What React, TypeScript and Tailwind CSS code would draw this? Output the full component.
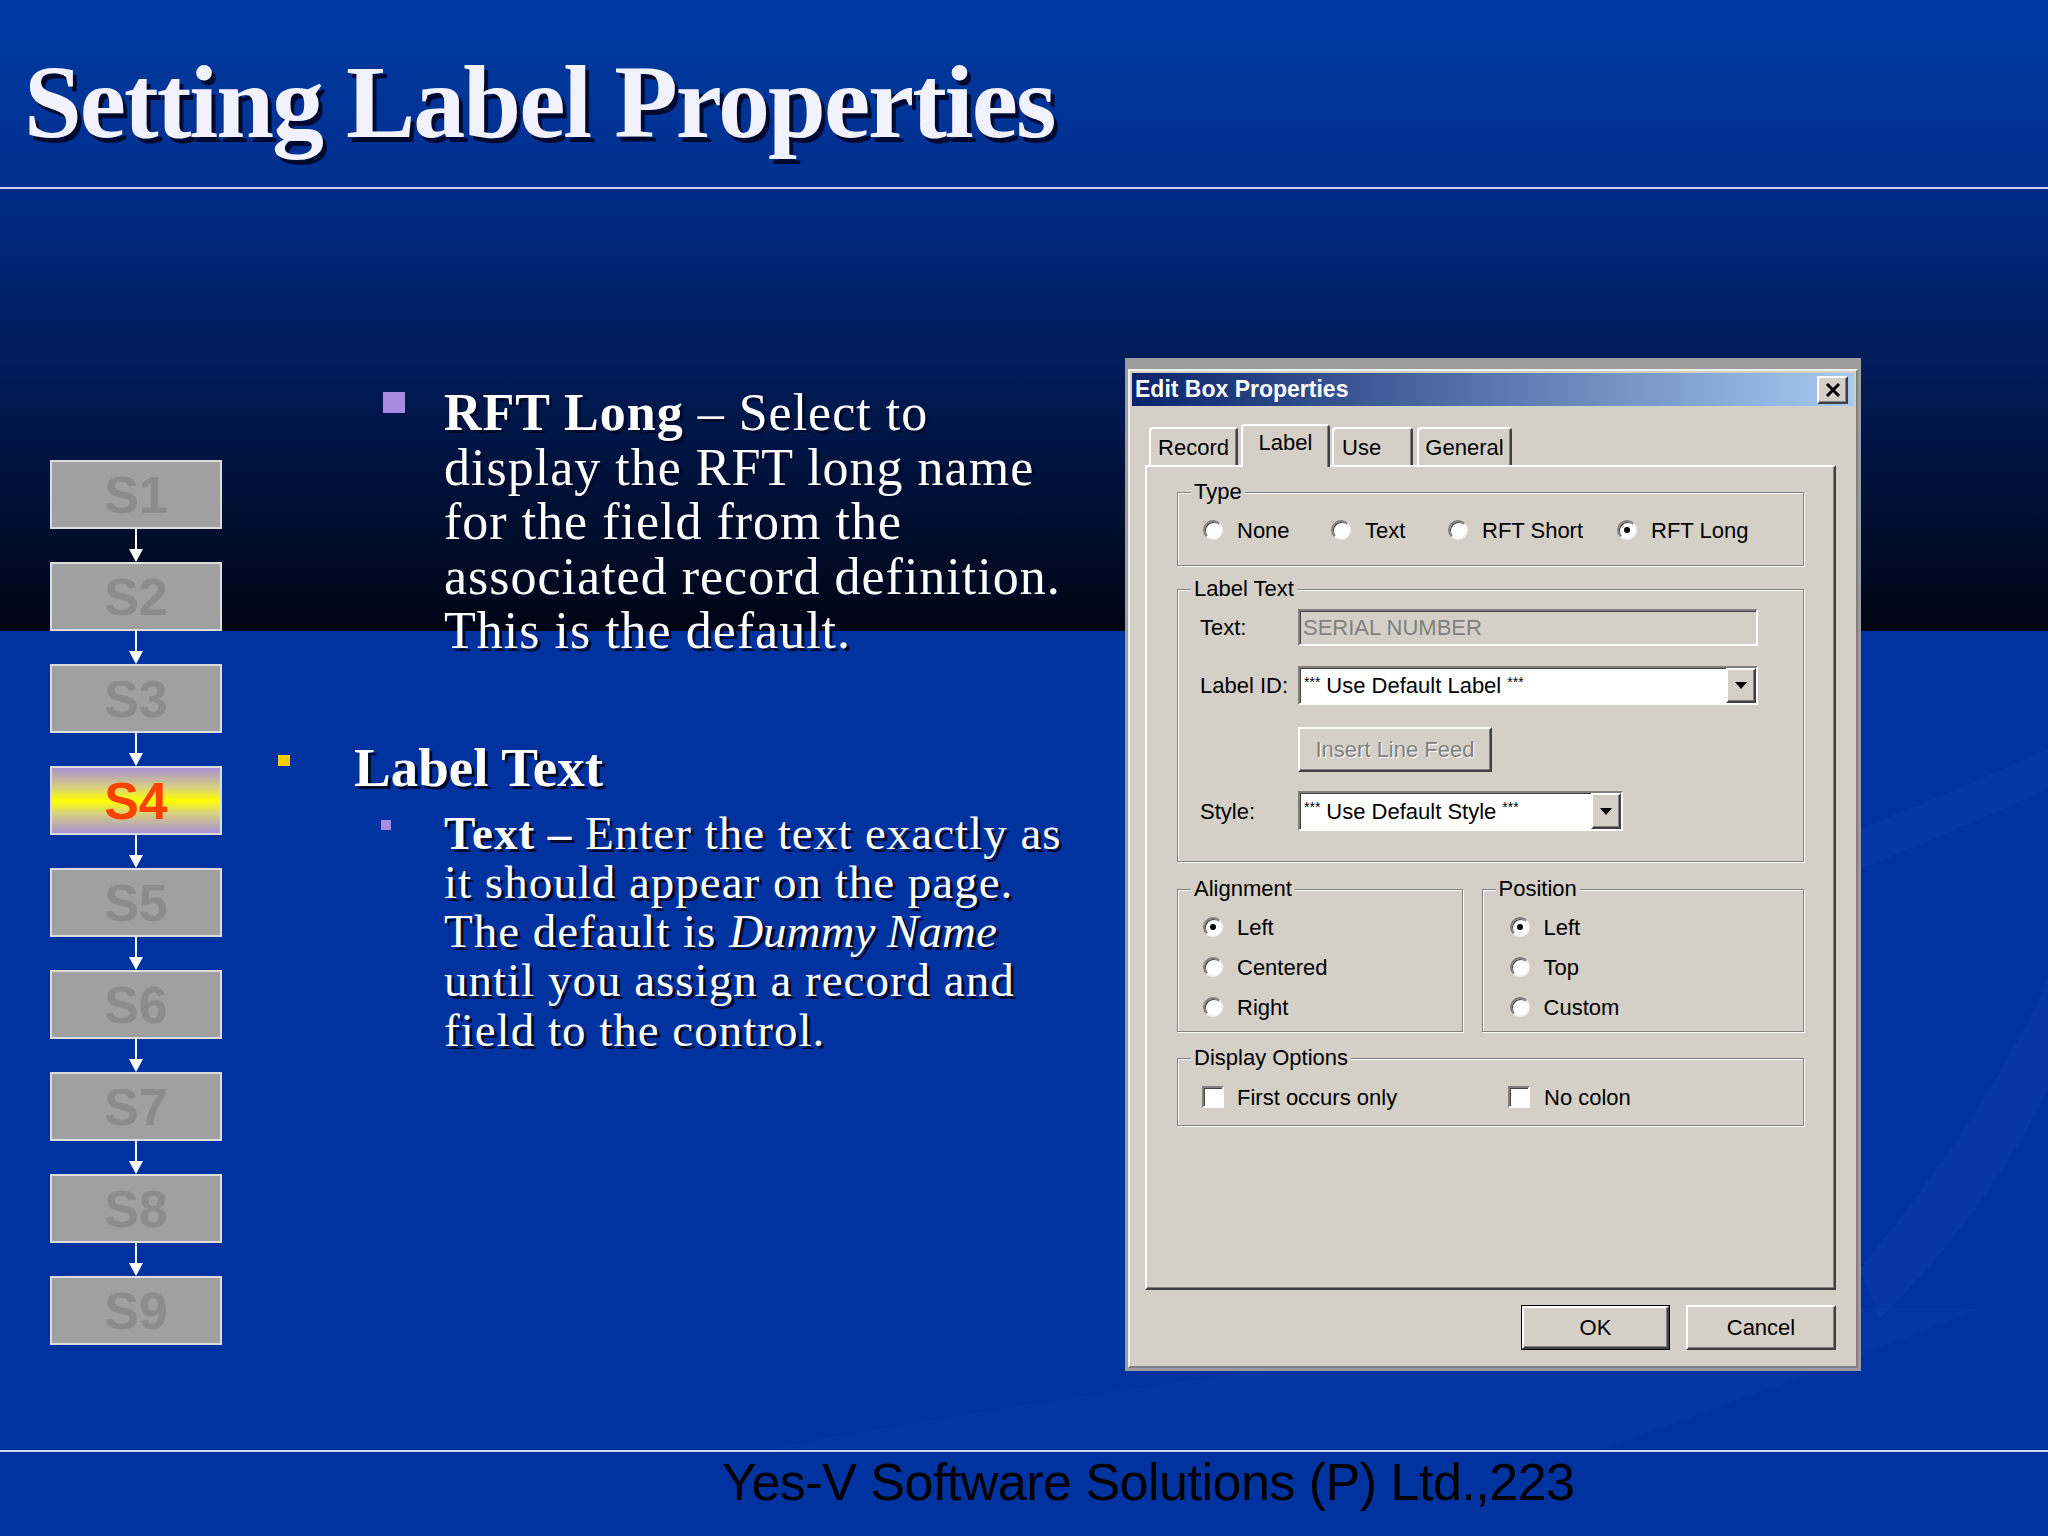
import React from 'react'

const steps = ['S1', 'S2', 'S3', 'S4', 'S5', 'S6', 'S7', 'S8', 'S9']

const raised =
  'border-2 border-t-white border-l-white border-r-[#404040] border-b-[#404040] shadow-[inset_-1px_-1px_0_#808080]'
const sunken =
  'border-2 border-t-[#808080] border-l-[#808080] border-r-white border-b-white shadow-[inset_1px_1px_0_#404040]'
const etched = 'border border-[#808080] shadow-[inset_1px_1px_0_#ffffff,1px_1px_0_#ffffff]'

function Step({ label, active }: { label: string; active?: boolean }) {
  return (
    <div
      className={`h-[69px] w-[172px] border-2 border-[#dcdcdc] flex items-center justify-center font-['Liberation_Sans',Arial,sans-serif] font-bold text-[52px] leading-none ${
        active
          ? 'bg-[linear-gradient(to_bottom,#a892d2_0%,#d8d080_30%,#ffff00_50%,#d8d080_70%,#a892d2_100%)] text-[#ff4200]'
          : 'bg-[#a0a0a0] text-[#8c8c8c]'
      }`}
    >
      {label}
    </div>
  )
}

function Arrow() {
  return (
    <div className="h-[33px] flex flex-col items-center">
      <div className="w-[2px] flex-1 bg-white" />
      <div className="w-0 h-0 border-l-[7px] border-r-[7px] border-t-[13px] border-l-transparent border-r-transparent border-t-white" />
    </div>
  )
}

function Radio({ checked }: { checked?: boolean }) {
  return (
    <span className="w-[20px] h-[20px] rounded-full bg-white border-2 border-t-[#808080] border-l-[#808080] border-r-[#f4f4f4] border-b-[#f4f4f4] shadow-[inset_1px_1px_0_#404040] flex items-center justify-center shrink-0">
      {checked && <span className="w-[6px] h-[6px] rounded-full bg-black" />}
    </span>
  )
}

function Check() {
  return <span className={`w-[22px] h-[22px] bg-white shrink-0 ${sunken}`} />
}

function RadioItem({ label, checked, className = '' }: { label: string; checked?: boolean; className?: string }) {
  return (
    <div className={`flex items-center h-[26px] ${className}`}>
      <Radio checked={checked} />
      <span className="ml-[14px]">{label}</span>
    </div>
  )
}

function GroupBox({ title, className = '', children }: { title: string; className?: string; children: React.ReactNode }) {
  return (
    <div className={`${etched} ${className}`}>
      <div className="-mt-[14px] ml-[13px] w-fit px-[3px] bg-[#d4d0c8] leading-[26px]">{title}</div>
      {children}
    </div>
  )
}

function Combo({ text, width, height }: { text: string; width: string; height: string }) {
  return (
    <div className={`${width} ${height} bg-white flex items-stretch ${sunken}`}>
      <div className="flex-1 flex items-center pl-[4px]">
        <span className="text-[14px] leading-none self-start mt-[7px] mr-[6px]">***</span>
        <span>{text}</span>
        <span className="text-[14px] leading-none self-start mt-[7px] ml-[6px]">***</span>
      </div>
      <div className={`w-[30px] bg-[#d4d0c8] flex items-center justify-center ${raised}`}>
        <span className="w-0 h-0 border-l-[6px] border-r-[6px] border-t-[7px] border-l-transparent border-r-transparent border-t-black" />
      </div>
    </div>
  )
}

function Tab({ label, width, selected, className = '' }: { label: string; width: string; selected?: boolean; className?: string }) {
  return (
    <div
      className={`${width} ${
        selected ? 'h-[43px] -mb-[2px] relative z-10 pt-[4px]' : 'h-[38px] pt-[6px]'
      } bg-[#d4d0c8] rounded-t-[4px] border-t-2 border-l-2 border-r-2 border-t-white border-l-white border-r-[#404040] shadow-[inset_-1px_0_0_#808080] text-center leading-[26px] ${className}`}
    >
      {label}
    </div>
  )
}

function Dialog() {
  return (
    <div className="w-[736px] h-[1013px] bg-[#9c9c9c] pt-[11px] px-[3px] pb-[3px] font-['Liberation_Sans',Arial,sans-serif] text-[22px] text-black">
      <div className="h-full bg-[#d4d0c8] border-2 border-t-[#f0f0f0] border-l-[#f0f0f0] border-r-[#808080] border-b-[#808080] p-[2px] flex flex-col">
        {/* title bar */}
        <div className="h-[33px] bg-[linear-gradient(to_right,#0a246a,#a6caf0)] flex items-center justify-between pl-[3px] pr-[6px]">
          <span className="text-white font-bold text-[23px] leading-none">Edit Box Properties</span>
          <div className={`w-[31px] h-[28px] bg-[#d4d0c8] flex items-center justify-center ${raised}`}>
            <svg width="16" height="14" viewBox="0 0 16 14">
              <path d="M2 1 L14 13 M14 1 L2 13" stroke="black" strokeWidth="3" />
            </svg>
          </div>
        </div>

        <div className="pl-[13px] pr-[18px]">
          {/* tabs */}
          <div className="mt-[18px] h-[41px] flex items-end pl-[4px]">
            <Tab label="Record" width="w-[89px]" />
            <Tab label="Label" width="w-[89px]" selected className="ml-[3px]" />
            <Tab label="Use" width="w-[81px]" className="ml-[2px] text-left pl-[8px]" />
            <Tab label="General" width="w-[95px]" className="ml-[4px]" />
          </div>

          {/* panel */}
          <div className="h-[825px] border-2 border-t-white border-l-white border-r-[#404040] border-b-[#404040] shadow-[inset_-1px_-1px_0_#808080] pt-[25px] px-[30px]">
            <GroupBox title="Type" className="pb-[22px]">
              <div className="flex mt-[12px] pl-[25px]">
                <RadioItem label="None" className="w-[128px]" />
                <RadioItem label="Text" className="w-[117px]" />
                <RadioItem label="RFT Short" className="w-[169px]" />
                <RadioItem label="RFT Long" checked />
              </div>
            </GroupBox>

            <GroupBox title="Label Text" className="mt-[23px] pb-[30px]">
              <div className="flex items-center mt-[7px] pl-[22px]">
                <span className="w-[98px]">Text:</span>
                <div className={`w-[460px] h-[37px] bg-[#d4d0c8] flex items-center pl-[3px] text-[#808080] ${sunken}`}>
                  SERIAL NUMBER
                </div>
              </div>
              <div className="flex items-center mt-[20px] pl-[22px]">
                <span className="w-[98px]">Label ID:</span>
                <Combo text="Use Default Label" width="w-[460px]" height="h-[39px]" />
              </div>
              <div className="flex mt-[22px] pl-[120px]">
                <div className={`w-[194px] h-[45px] flex items-center justify-center text-[#808080] [text-shadow:1px_1px_0_#ffffff] ${raised}`}>
                  Insert Line Feed
                </div>
              </div>
              <div className="flex items-center mt-[19px] pl-[22px]">
                <span className="w-[98px]">Style:</span>
                <Combo text="Use Default Style" width="w-[325px]" height="h-[40px]" />
              </div>
            </GroupBox>

            <div className="flex gap-[19px] mt-[27px]">
              <GroupBox title="Alignment" className="w-[286px] pb-[11px]">
                <div className="flex flex-col gap-[14px] mt-[12px] pl-[25px]">
                  <RadioItem label="Left" checked />
                  <RadioItem label="Centered" />
                  <RadioItem label="Right" />
                </div>
              </GroupBox>
              <GroupBox title="Position" className="w-[323px] pb-[11px]">
                <div className="flex flex-col gap-[14px] mt-[12px] pl-[27px]">
                  <RadioItem label="Left" checked />
                  <RadioItem label="Top" />
                  <RadioItem label="Custom" />
                </div>
              </GroupBox>
            </div>

            <GroupBox title="Display Options" className="mt-[26px] pb-[15px]">
              <div className="flex items-center h-[26px] mt-[13px] pl-[24px]">
                <div className="flex items-center w-[306px]">
                  <Check />
                  <span className="ml-[13px]">First occurs only</span>
                </div>
                <Check />
                <span className="ml-[14px]">No colon</span>
              </div>
            </GroupBox>
          </div>

          {/* buttons */}
          <div className="flex justify-end gap-[16px] mt-[15px]">
            <div className="w-[149px] h-[45px] border border-black">
              <div className={`h-full flex items-center justify-center ${raised}`}>OK</div>
            </div>
            <div className={`w-[150px] h-[45px] flex items-center justify-center ${raised}`}>Cancel</div>
          </div>
        </div>
      </div>
    </div>
  )
}

export default function App() {
  return (
    <div className="w-[2048px] h-[1536px] overflow-hidden bg-[#0033a0] font-['Liberation_Serif','Times_New_Roman',serif] text-white">
      {/* header */}
      <header className="h-[187px] bg-[linear-gradient(to_bottom,#003ba3,#002f8e)] pl-[24px] pt-[50px]">
        <h1 className="text-[104px] leading-none font-bold tracking-[-2px] text-[#f2f2ff] [text-shadow:4px_5px_0_#000a30]">
          Setting Label Properties
        </h1>
      </header>
      <div className="h-[2px] bg-[#c8d2ee]" />

      <main className="relative h-[1261px] flex bg-[linear-gradient(to_bottom,#002b86_0px,#000513_442px,#0033a0_442px,#0033a0_100%)]">
        {/* faint swooshes in the lower right */}
        <svg className="absolute inset-0" width="2048" height="1261" viewBox="0 0 2048 1261">
          <path d="M1860 640 Q1960 600 2048 560 L2048 600 Q1960 640 1860 680 Z" fill="#2a58c0" opacity="0.15" />
          <path d="M1860 1080 Q1990 920 2048 790 L2048 900 Q1990 1020 1880 1130 Z" fill="#2a58c0" opacity="0.14" />
          <path d="M760 1261 Q1200 1180 1700 1130 Q1850 1115 1980 1120 Q1800 1190 1600 1261 Z" fill="#1d4cb4" opacity="0.15" />
        </svg>

        {/* step column */}
        <div className="relative ml-[50px] w-[172px] pt-[271px] flex flex-col">
          {steps.map((s, i) => (
            <React.Fragment key={s}>
              <Step label={s} active={s === 'S4'} />
              {i < steps.length - 1 && <Arrow />}
            </React.Fragment>
          ))}
        </div>

        {/* text column */}
        <div className="relative ml-[56px] w-[847px] pt-[197px] [text-shadow:3px_3px_0_#000a2a]">
          <div className="flex pl-[105px]">
            <span className="w-[22px] h-[21px] mt-[6px] bg-[#a88ae0] shrink-0" />
            <p className="ml-[39px] text-[52px] leading-[54.5px] tracking-[1px] whitespace-nowrap">
              <b>RFT Long</b> – Select to
              <br />
              display the RFT long name
              <br />
              for the field from the
              <br />
              associated record definition.
              <br />
              This is the default.
            </p>
          </div>

          <div className="flex mt-[79px]">
            <span className="w-[12px] h-[11px] mt-[17px] bg-[#ffcc00] shrink-0" />
            <p className="ml-[64px] text-[55px] leading-[60px] font-bold whitespace-nowrap">Label Text</p>
          </div>

          <div className="flex pl-[103px] mt-[11px]">
            <span className="w-[10px] h-[10px] mt-[11px] bg-[#a88ae0] shrink-0" />
            <p className="ml-[53px] text-[47px] leading-[49.3px] tracking-[1px] whitespace-nowrap">
              <b>Text –</b> Enter the text exactly as
              <br />
              it should appear on the page.
              <br />
              The default is <i className="tracking-[0px]">Dummy Name</i>
              <br />
              until you assign a record and
              <br />
              field to the control.
            </p>
          </div>
        </div>

        {/* dialog */}
        <div className="relative mt-[169px]">
          <Dialog />
        </div>
      </main>

      <div className="h-[2px] bg-[#d0d8f0]" />
      <footer className="pl-[722px] font-['Liberation_Sans',Arial,sans-serif] text-[52px] leading-[60px] tracking-[-0.5px] text-black">
        Yes-V Software Solutions (P) Ltd.,223
      </footer>
    </div>
  )
}
